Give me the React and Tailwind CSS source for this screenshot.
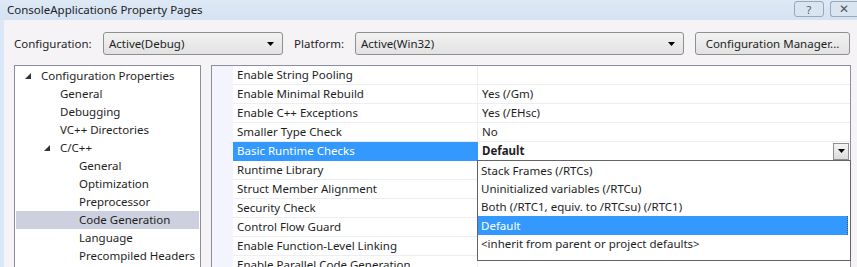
import React from "react";

const tree = [
  { label: "Configuration Properties", level: 0, open: true },
  { label: "General", level: 1 },
  { label: "Debugging", level: 1 },
  { label: "VC++ Directories", level: 1 },
  { label: "C/C++", level: 1, open: true },
  { label: "General", level: 2 },
  { label: "Optimization", level: 2 },
  { label: "Preprocessor", level: 2 },
  { label: "Code Generation", level: 2, selected: true },
  { label: "Language", level: 2 },
  { label: "Precompiled Headers", level: 2 },
];

const rows = [
  ["Enable String Pooling", ""],
  ["Enable Minimal Rebuild", "Yes (/Gm)"],
  ["Enable C++ Exceptions", "Yes (/EHsc)"],
  ["Smaller Type Check", "No"],
  ["Basic Runtime Checks", "Default"],
  ["Runtime Library", ""],
  ["Struct Member Alignment", ""],
  ["Security Check", ""],
  ["Control Flow Guard", ""],
  ["Enable Function-Level Linking", ""],
  ["Enable Parallel Code Generation", ""],
];

const options = [
  "Stack Frames (/RTCs)",
  "Uninitialized variables (/RTCu)",
  "Both (/RTC1, equiv. to /RTCsu) (/RTC1)",
  "Default",
  "<inherit from parent or project defaults>",
];

function Arrow() {
  return (
    <svg width="7" height="4" viewBox="0 0 7 4">
      <polygon points="0,0 7,0 3.5,4" fill="#000" />
    </svg>
  );
}

function Expander() {
  return (
    <svg width="6" height="6" viewBox="0 0 6 6">
      <polygon points="6,0 6,6 0,6" fill="#333" />
    </svg>
  );
}

function Combo({ text, width }) {
  return (
    <div
      className={`${width} h-[23px] flex items-center justify-between pl-[5px] pr-[8px] border border-[#8e8f8f] rounded-[3px] bg-gradient-to-b from-[#f2f2f2] to-[#e2e2e2]`}
    >
      <span>{text}</span>
      <Arrow />
    </div>
  );
}

export default function App() {
  return (
    <div className="w-[857px] h-[267px] overflow-hidden font-['Noto_Sans',sans-serif] text-[11.5px] text-[#1e1e1e] leading-none bg-[#f6f3f6]">
      {/* title bar */}
      <div className="h-[20px] flex items-center justify-between pl-[7px] bg-gradient-to-b from-[#dfe9f6] to-[#d5e2f2]">
        <span className="text-[11.5px] text-[#222]">ConsoleApplication6 Property Pages</span>
        <div className="flex items-start self-start pt-[1px] gap-[6px]">
          <div className="w-[30px] h-[16px] flex items-center justify-center border border-[#9aa8bb] rounded-[3px] bg-[#dae5f2] text-[11px] text-[#555]">
            ?
          </div>
          <div className="w-[27px] h-[16px] flex items-center justify-center border border-r-0 border-[#9aa8bb] rounded-l-[3px] bg-[#dae5f2] text-[12px] text-[#555]">
            ✕
          </div>
        </div>
      </div>

      <div className="flex">
        <div className="w-[4px] h-[247px] bg-[#dae7f6]" />
        <div className="flex-1">
          {/* configuration row */}
          <div className="flex items-center pl-[10px] pt-[12px]">
            <span className="w-[89px]">Configuration:</span>
            <Combo text="Active(Debug)" width="w-[180px]" />
            <span className="w-[61px] ml-[11px]">Platform:</span>
            <Combo text="Active(Win32)" width="w-[329px]" />
            <div className="ml-[11px] w-[155px] h-[23px] flex items-center justify-center border border-[#8e8f8f] rounded-[3px] bg-gradient-to-b from-[#f2f2f2] to-[#e2e2e2]">
              Configuration Manager...
            </div>
          </div>

          {/* panels */}
          <div className="flex pl-[10px] mt-[10px]">
            <div className="w-[187px] h-[210px] border border-[#8c8e9d] bg-white pt-[1px] px-[1px]">
              {tree.map((t, i) => (
                <div
                  key={i}
                  className={`h-[18px] flex items-center ${t.selected ? "bg-[#cdd0df]" : ""}`}
                  style={{ paddingLeft: 6 + t.level * 19 }}
                >
                  <span className="w-[19px] flex justify-start pl-[3px]">{t.open ? <Expander /> : null}</span>
                  <span>{t.label}</span>
                </div>
              ))}
            </div>

            <div className="relative ml-[10px] w-[640px] h-[210px] border border-[#8c8e9d] bg-white">
              {rows.map(([name, value], i) => {
                const sel = i === 4;
                return (
                  <div key={i} className="flex h-[19px]">
                    <div className="w-[21px] bg-[#f4f4fe]" />
                    <div
                      className={`w-[245px] flex items-center pl-[4px] border-b border-r ${
                        sel ? "bg-[#3399ff] text-white border-[#3399ff]" : "border-[#eceef4]"
                      }`}
                    >
                      {name}
                    </div>
                    <div className="flex-1 flex items-center justify-between pl-[4px] pr-[1px] border-b border-[#eceef4]">
                      <span className={sel ? "font-bold" : ""}>{value}</span>
                      {sel && (
                        <div className="w-[16px] h-[17px] flex items-center justify-center border border-[#8f8f8f] bg-gradient-to-b from-[#f4f4f4] to-[#dcdcdc]">
                          <Arrow />
                        </div>
                      )}
                    </div>
                  </div>
                );
              })}

              {/* dropdown list */}
              <div className="absolute left-[265px] top-[94px] w-[374px] border border-[#646464] bg-white pt-[1px] pb-[7px] pr-[2px]">
                {options.map((o, i) => (
                  <div
                    key={i}
                    className={`flex items-center pl-[3px] ${
                      i === 3 ? "h-[19px] bg-[#3399ff] text-white border-r border-dotted border-[#555]" : "h-[18px]"
                    }`}
                  >
                    {o}
                  </div>
                ))}
              </div>
            </div>
          </div>
        </div>
      </div>
    </div>
  );
}
